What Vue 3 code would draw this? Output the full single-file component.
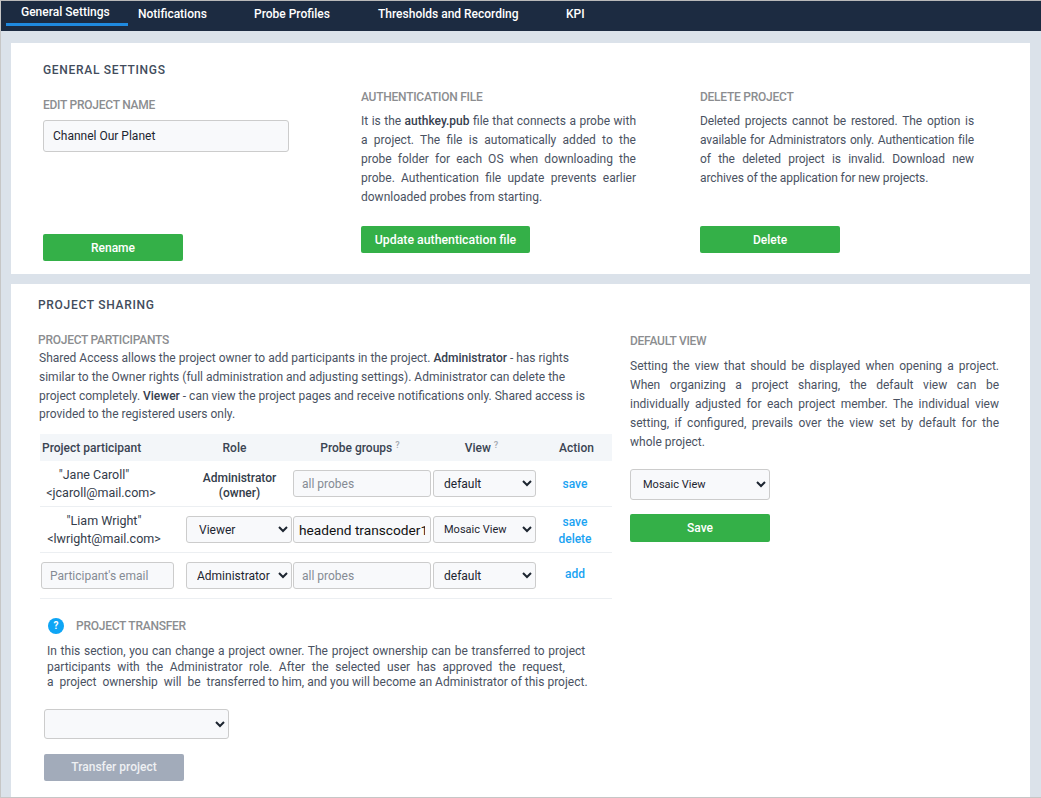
<script setup>
const tabs = ['General Settings', 'Notifications', 'Probe Profiles', 'Thresholds and Recording', 'KPI']
</script>

<template>
  <div class="page">
    <nav class="nav">
      <a v-for="(t, i) in tabs" :key="t" class="tab" :class="'tab' + i">{{ t }}</a>
    </nav>

    <section class="card card-general">
      <div class="col col-name">
        <h2 class="title">GENERAL SETTINGS</h2>
        <h3 class="sub sub-name">EDIT PROJECT NAME</h3>
        <input class="field name-field" value="Channel Our Planet" />
        <button class="btn rename">Rename</button>
      </div>
      <div class="col col-auth">
        <h3 class="sub">AUTHENTICATION FILE</h3>
        <p class="text">It is the <b>authkey.pub</b> file that connects a probe with a project. The file is automatically added to the probe folder for each OS when downloading the probe. Authentication file update prevents earlier downloaded probes from starting.</p>
        <button class="btn update">Update authentication file</button>
      </div>
      <div class="col col-del">
        <h3 class="sub">DELETE PROJECT</h3>
        <p class="text del-text">Deleted projects cannot be restored. The option is available for Administrators only. Authentication file of the deleted project is invalid. Download new archives of the application for new projects.</p>
        <button class="btn delete">Delete</button>
      </div>
    </section>

    <section class="card card-sharing">
      <div class="share-left">
        <h2 class="title">PROJECT SHARING</h2>
        <h3 class="sub participants-sub">PROJECT PARTICIPANTS</h3>
        <p class="intro">Shared Access allows the project owner to add participants in the project. <b>Administrator</b> - has rights similar to the Owner rights (full administration and adjusting settings). Administrator can delete the project completely. <b>Viewer</b> - can view the project pages and receive notifications only. Shared access is provided to the registered users only.</p>

        <div class="table">
          <div class="row head">
            <div class="c left">Project participant</div>
            <div class="c head-role">Role</div>
            <div class="c head-probe">Probe groups<sup>?</sup></div>
            <div class="c head-view">View<sup>?</sup></div>
            <div class="c head-action">Action</div>
          </div>
          <div class="row">
            <div class="c person jane"><span class="jane-name">"Jane Caroll"</span><br />&lt;jcaroll@mail.com&gt;</div>
            <div class="c owner">Administrator<br />(owner)</div>
            <div class="c"><input class="field cell" placeholder="all probes" /></div>
            <div class="c"><select class="field cell compact"><option>default</option></select></div>
            <div class="c links"><a>save</a></div>
          </div>
          <div class="row">
            <div class="c person liam">"Liam Wright"<br />&lt;lwright@mail.com&gt;</div>
            <div class="c"><select class="field cell role viewer"><option>Viewer</option></select></div>
            <div class="c"><input class="field cell strong" value="headend transcoder1" /></div>
            <div class="c"><select class="field cell compact mosaic"><option>Mosaic View</option></select></div>
            <div class="c links"><a>save</a><a>delete</a></div>
          </div>
          <div class="row">
            <div class="c"><input class="field cell email" placeholder="Participant's email" /></div>
            <div class="c"><select class="field cell role admin"><option>Administrator</option></select></div>
            <div class="c"><input class="field cell" placeholder="all probes" /></div>
            <div class="c"><select class="field cell compact"><option>default</option></select></div>
            <div class="c links add"><a>add</a></div>
          </div>
        </div>

        <div class="transfer">
          <div class="transfer-head">
            <span class="help">?</span>
            <h3 class="sub">PROJECT TRANSFER</h3>
          </div>
          <p class="transfer-text">
            <span class="line line1">In this section, you can change a project owner. The project ownership can be transferred to project</span>
            <span class="line line2">participants&nbsp; with&nbsp; the&nbsp; Administrator&nbsp; role.&nbsp; After&nbsp; the&nbsp; selected&nbsp; user&nbsp; has&nbsp; approved&nbsp; the&nbsp; request,</span>
            <span class="line">a&nbsp; project&nbsp; ownership&nbsp; will&nbsp; be&nbsp; transferred to him, and you will become an Administrator of this project.</span>
          </p>
          <select class="field transfer-select"><option></option></select>
          <button class="btn muted">Transfer project</button>
        </div>
      </div>

      <div class="share-right">
        <h3 class="sub">DEFAULT VIEW</h3>
        <p class="text">Setting the view that should be displayed when opening a project. When organizing a project sharing, the default view can be individually adjusted for each project member. The individual view setting, if configured, prevails over the view set by default for the whole project.</p>
        <select class="field view-select"><option>Mosaic View</option></select>
        <button class="btn save">Save</button>
      </div>
    </section>
  </div>
</template>

<style>
html, body { margin: 0; padding: 0; }
</style>

<style scoped>
.page {
  box-sizing: border-box;
  width: 1041px;
  height: 798px;
  overflow: hidden;
  background: #dbe2ea;
  border-top: 1px solid #b9b9b9;
  border-left: 1px solid #c6c6c6;
  border-bottom: 1px solid #c6c6c6;
  font-family: Roboto, "Noto Sans", sans-serif;
  font-size: 12px;
  color: #4a5262;
}
.nav {
  display: flex;
  height: 30px;
  background: #1c2b41;
  padding-left: 5px;
}
.tab {
  box-sizing: border-box;
  color: #fff;
  font-size: 12px;
  font-weight: 500;
  line-height: 27px;
  white-space: nowrap;
}
.tab0 { width: 122px; height: 25px; padding-left: 15px; line-height: 23px; border-bottom: 3px solid #1f8ae0; }
.tab1 { margin-left: 10px; width: 116px; }
.tab2 { width: 124px; }
.tab3 { width: 188px; }
.card {
  background: #fff;
  margin-left: 10px;
  width: 1019px;
  box-sizing: border-box;
}
.card-general {
  margin-top: 12px;
  height: 231px;
  display: flex;
}
.col { display: flex; flex-direction: column; align-items: flex-start; }
.col-name { width: 246px; margin-left: 32px; }
.col-auth { width: 275px; margin-left: 72px; padding-top: 47px; }
.col-del { width: 274px; margin-left: 64px; padding-top: 47px; }
.title {
  margin: 0;
  font-size: 12px;
  font-weight: 500;
  color: #424c5c;
  letter-spacing: 0.7px;
  line-height: 18px;
}
.col-name .title { margin-top: 18px; }
.sub {
  margin: 0;
  font-size: 12px;
  font-weight: 500;
  color: #8b8d90;
  line-height: 14px;
  letter-spacing: -0.25px;
}
.sub-name { margin-top: 19px; }
.text {
  margin: 8px 0 0;
  font-size: 12px;
  line-height: 19px;
  text-align: justify;
}
.del-text { letter-spacing: -0.1px; }
.text b, .intro b { font-weight: 500; color: #36404f; }
.field {
  box-sizing: border-box;
  background: #f8f9fb;
  border: 1px solid #cccccc;
  border-radius: 3px;
  font-family: inherit;
  font-size: 12px;
  color: #1d2530;
  outline: none;
}
.field::placeholder { color: #858b94; }
.name-field { width: 246px; height: 32px; margin-top: 8px; padding: 0 9px; }
.btn {
  display: block;
  box-sizing: border-box;
  border: 0;
  border-radius: 2px;
  background: #34b048;
  color: #fff;
  font-family: inherit;
  font-size: 12px;
  font-weight: 500;
  height: 27px;
  width: 140px;
  padding: 0;
}
.rename { margin-top: 82px; }
.update { width: 169px; margin-top: 19px; font-size: 12.3px; }
.delete { margin-top: 38px; }
.card-sharing {
  margin-top: 10px;
  height: 514px;
  display: flex;
}
.share-left { width: 574px; margin-left: 27px; }
.share-left .title { margin-top: 12px; }
.participants-sub { margin-top: 19px; }
.intro { margin: 2px 0 0 1px; width: 550px; line-height: 18.75px; font-size: 12px; }
.table { margin: 10px 0 0 2px; width: 572px; }
.row {
  display: grid;
  grid-template-columns: 146px 107px 140px 105px 74px;
  height: 46px;
  border-bottom: 1px solid #eceff2;
  box-sizing: border-box;
}
.row.head { height: 27px; padding-top: 1px; background: #f3f6f9; border: 0; font-weight: 500; color: #3a4452; }
.c {
  display: block;
  align-self: center;
  text-align: center;
  line-height: 17px;
}
.c.left { text-align: left; padding-left: 2px; }
.head-role { padding-right: 10px; }
.head-probe { padding-right: 6px; }
.head-view { padding-right: 8px; }
.head-action { padding-left: 3px; }
.c.person { color: #333c4a; font-size: 12.5px; line-height: 18px; }
.jane { padding-right: 24px; }
.jane-name { padding-right: 14px; }
.liam { padding-right: 18px; }
.c.owner { color: #333c4a; font-weight: 500; line-height: 15px; padding-top: 4px; }
sup { font-size: 9px; color: #a5abb3; font-weight: 600; line-height: 0; margin-left: 3px; vertical-align: 4px; }
.cell { display: block; width: calc(100% - 2px); height: 27px; padding: 0 8px; }
.compact { padding: 0 0 0 6px; }
.mosaic { font-size: 11px; padding-left: 6px; }
.role { width: calc(100% - 1px); }
.admin { padding: 0 0 0 6px; }
.email { width: 133px; margin-left: 1px; }
.strong { color: #111; font-size: 13.7px; padding: 0 5px; }
.viewer { padding-left: 8px; }
.links { color: #1ba3f2; font-weight: 500; padding-top: 2px; }
.links a { display: block; }
.add { padding-bottom: 4px; }
.transfer { margin-left: 6px; margin-top: 19px; }
.transfer-head { display: flex; align-items: center; gap: 12px; margin-left: 4px; }
.help {
  width: 16px;
  height: 16px;
  border-radius: 50%;
  background: #0ea5f5;
  color: #fff;
  font-size: 10px;
  font-weight: 700;
  line-height: 16px;
  text-align: center;
}
.transfer-text { margin: 10px 0 0 3px; line-height: 15.6px; font-size: 12px; white-space: nowrap; }
.line { display: block; }
.line1 { word-spacing: 0.75px; }
.line2 { word-spacing: 0.3px; }
.transfer-select { display: block; width: 185px; height: 30px; margin-top: 18px; }
.muted { background: #a2abba; margin-top: 15px; color: #eef0f3; }
.share-right { width: 369px; margin-left: 18px; padding-top: 50px; }
.share-right .text { margin-top: 9px; }
.view-select { display: block; width: 140px; height: 31px; margin-top: 17px; padding-left: 8px; font-size: 11px; }
.save { margin-top: 14px; height: 28px; }
</style>
